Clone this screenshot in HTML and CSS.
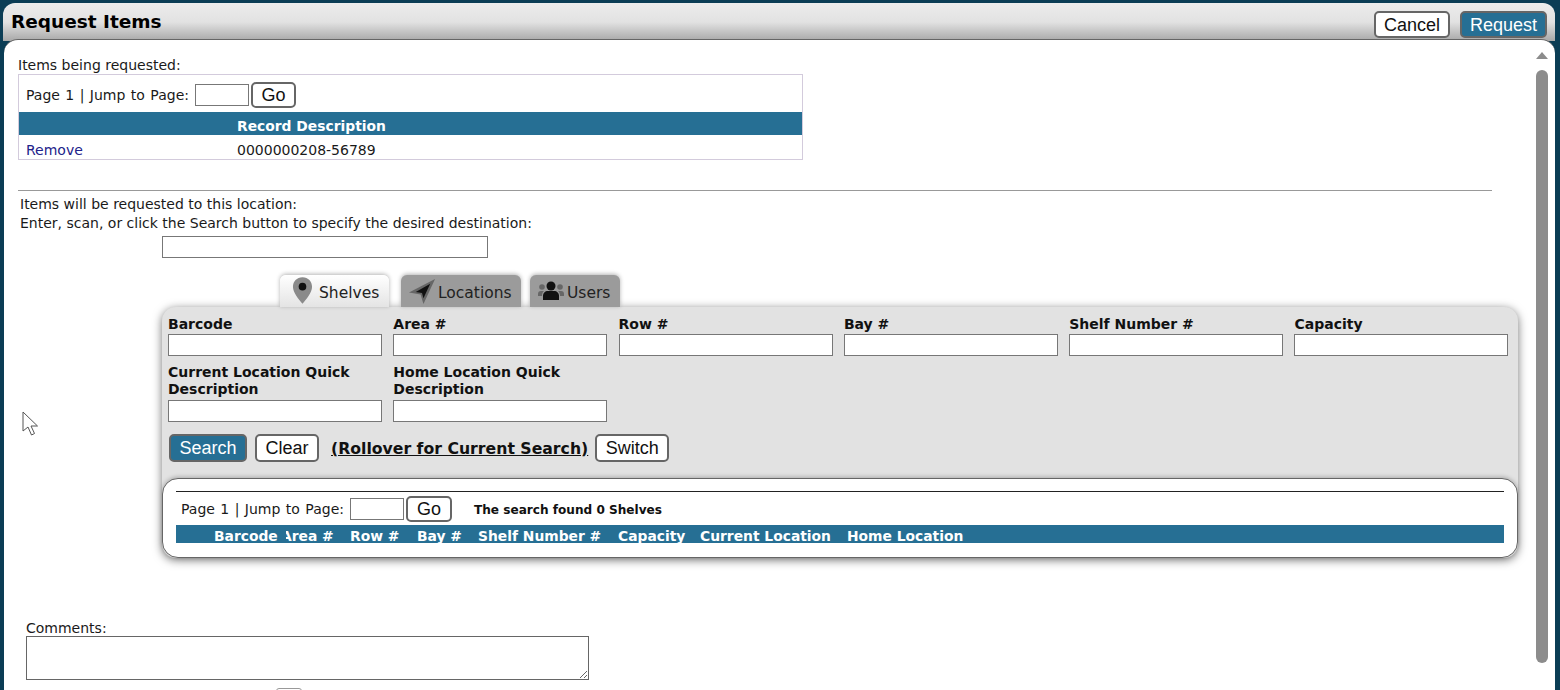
FILE: index.html
```html
<!DOCTYPE html>
<html lang="en">
<head>
<meta charset="utf-8">
<title>Request Items</title>
<link rel="stylesheet" href="styles.css">
</head>
<body>
<div class="window">
  <header class="titlebar">
    <h1 class="title">Request Items</h1>
    <div class="actions">
      <button class="btn btn-title">Cancel</button>
      <button class="btn btn-title btn-primary">Request</button>
    </div>
  </header>
  <div class="content">
    <main class="scroll">
      <div class="items-label">Items being requested:</div>
      <section class="items-box">
        <div class="pager">
          <span>Page 1 | Jump to Page:</span>
          <input class="pager-input" type="text">
          <button class="btn btn-go">Go</button>
        </div>
        <div class="items-head"><span class="items-col1"></span><span>Record Description</span></div>
        <div class="items-row"><a class="items-col1 link" href="#">Remove</a><span>0000000208-56789</span></div>
      </section>
      <hr class="rule">
      <div class="dest-text">
        <div>Items will be requested to this location:</div>
        <div>Enter, scan, or click the Search button to specify the desired destination:</div>
      </div>
      <input class="dest-input" type="text">
      <nav class="tabs">
        <div class="tab tab-active">
          <svg class="ico-pin" viewBox="0 0 22 28"><path fill="#8a8a8a" d="M11 0C5 0 1 4.500 1 10c0 6 6 13 10 18 4-5 10-12 10-18C21 4.500 17 0 11 0z"/><circle cx="11" cy="10" r="4" fill="#111"/></svg>
          <span>Shelves</span>
        </div>
        <div class="tab tab-nav">
          <svg class="ico-nav" viewBox="0 0 28 28"><path fill="#666" d="M0 15 27 1 15 27 12 17z"/><path fill="#111" d="M7 14.500 22 6 15 21 13.500 15.500z"/></svg>
          <span>Locations</span>
        </div>
        <div class="tab tab-users">
          <svg class="ico-users" viewBox="0 0 26 20"><circle cx="13" cy="5" r="4.500" fill="#111"/><path fill="#111" d="M5 19v-4c0-3 2-5 5-5h6c3 0 5 2 5 5v4z"/><circle cx="4" cy="6" r="2.800" fill="#666"/><circle cx="22" cy="6" r="2.800" fill="#666"/><path fill="#666" d="M0 15v-2c0-2 1-3 3-3h3c-1.500 1-2 3-2 5zM26 15v-2c0-2-1-3-3-3h-3c1.500 1 2 3 2 5z"/></svg>
          <span>Users</span>
        </div>
      </nav>
      <section class="panel">
        <div class="fields">
          <label class="field"><span class="field-label">Barcode</span><input type="text"></label>
          <label class="field"><span class="field-label">Area #</span><input type="text"></label>
          <label class="field"><span class="field-label">Row #</span><input type="text"></label>
          <label class="field"><span class="field-label">Bay #</span><input type="text"></label>
          <label class="field"><span class="field-label">Shelf Number #</span><input type="text"></label>
          <label class="field"><span class="field-label">Capacity</span><input type="text"></label>
          <label class="field field-tall"><span class="field-label">Current Location Quick Description</span><input type="text"></label>
          <label class="field field-tall"><span class="field-label">Home Location Quick Description</span><input type="text"></label>
        </div>
        <div class="search-actions">
          <button class="btn btn-search btn-primary">Search</button>
          <button class="btn btn-clear">Clear</button>
          <a class="rollover" href="#">(Rollover for Current Search)</a>
          <button class="btn btn-switch">Switch</button>
        </div>
        <div class="results">
          <div class="results-rule"></div>
          <div class="pager pager-results">
            <span>Page 1 | Jump to Page:</span>
            <input class="pager-input" type="text">
            <button class="btn btn-go btn-go-wide">Go</button>
            <strong class="found">The search found 0 Shelves</strong>
          </div>
          <div class="results-head">
            <span></span>
            <span>Barcode</span>
            <span class="clip"><span class="clip-inner">Area #</span></span>
            <span>Row #</span>
            <span>Bay #</span>
            <span>Shelf Number #</span>
            <span>Capacity</span>
            <span>Current Location</span>
            <span>Home Location</span>
          </div>
        </div>
      </section>
      <div class="comments">
        <label class="comments-label" for="c">Comments:</label>
        <textarea id="c" class="comments-input"></textarea>
      </div>
      <div class="peek"></div>
      <svg class="cursor" viewBox="0 0 17 25"><path fill="#fff" stroke="#555" stroke-width="1" d="M1 1v19l5-4 3.500 8 3-1.500-3.500-7.500h6.500z"/></svg>
    </main>
    <aside class="scrollbar">
      <div class="arrow"></div>
      <div class="thumb"></div>
    </aside>
  </div>
</div>
</body>
</html>
```
FILE: styles.css
```css
* { box-sizing: border-box; }
html, body { margin: 0; height: 690px; overflow: hidden; }
body {
  background: #0b3d55;
  font-family: "DejaVu Sans", Verdana, sans-serif;
  font-size: 14px;
  color: #1a1a1a;
  padding: 3px 5px 0 3px;
}
.window {
  height: 687px;
  border-radius: 12px 12px 0 0;
  background: linear-gradient(#ececec, #e2e2e2 50%, #a8a8a8 100%);
  background-size: 100% 38px;
  background-repeat: no-repeat;
  display: flex;
  flex-direction: column;
  overflow: hidden;
}
.titlebar {
  height: 36px;
  flex: none;
  display: flex;
  justify-content: space-between;
  align-items: flex-start;
  padding: 8px 8px 0 8px;
}
.title { margin: 0; font-size: 18.5px; line-height: 21px; font-weight: 700; color: #000; }
.actions { display: flex; gap: 10px; }
.btn {
  font-family: "Liberation Sans", Arial, sans-serif;
  font-size: 18px;
  line-height: 1;
  padding: 0;
  background: #fff;
  color: #111;
  border: 2px solid #666;
  border-radius: 5px;
}
.btn-primary { background: #266f94; color: #fff; }
.btn-title { height: 27px; width: 76px; }
.btn-title.btn-primary { width: 87px; }
.content {
  flex: 1;
  min-height: 0;
  display: flex;
  background: #fff;
  border-radius: 14px 14px 0 0;
  border-top: 1px solid #666;
  margin-left: 1px;
}
.scroll { flex: 1; min-width: 0; padding: 16px 0 0 14px; overflow: hidden; position: relative; }
.scrollbar { width: 19px; flex: none; display: flex; flex-direction: column; align-items: flex-start; padding: 12px 0 0 0; }
.arrow { width: 0; height: 0; border: 6px solid transparent; border-top: 0; border-bottom: 7px solid #8c8c8c; }
.thumb { margin-top: 11px; width: 12px; height: 593px; background: #8c8c8c; border-radius: 6px; }
.items-label { line-height: 18px; }
.items-box { width: 785px; border: 1px solid #d3cbdc; margin-top: 0; }
.pager { display: flex; align-items: center; height: 37px; padding: 2px 0 0 7px; gap: 5px; word-spacing: 1px; }
.pager-input { width: 54px; height: 22px; border: 1px solid #777; margin: 0 0 0 1px; padding: 0; background: #fff; }
.btn-go { width: 45px; height: 26px; margin-left: -3px; }
.btn-go-wide { width: 46px; }
.items-head { height: 23px; padding-top: 4px; background: #266f94; color: #fff; font-weight: 700; font-size: 13.85px; display: flex; align-items: center; }
.items-row { height: 24px; padding-top: 5px; display: flex; align-items: center; }
.items-col1 { display: block; width: 218px; padding-left: 7px; }
.link { color: #22228a; text-decoration: none; }
.rule { margin: 30px 0 0; width: 1474px; border: 0; border-top: 1px solid #999; height: 1px; }
.dest-text { margin: 4px 0 0 2px; line-height: 19px; }
.dest-input { display: block; margin: 3px 0 0 144px; width: 326px; height: 22px; border: 1px solid #777; background: #fff; padding: 0; }
.tabs { display: flex; margin: 17px 0 0 262px; height: 32px; position: relative; z-index: 3; }
.tab {
  height: 32px;
  display: flex;
  align-items: center;
  padding-top: 4px;
  border-radius: 6px 6px 0 0;
  background: #9b9b9b;
  box-shadow: 0 -1px 4px rgba(0,0,0,.3);
  font-size: 15.5px;
  color: #222;
}
.tab-active { width: 109px; background: linear-gradient(#fff, #e4e4e4); padding-left: 12px; gap: 6px; }
.tab-nav { width: 120px; margin-left: 12px; padding-left: 8px; gap: 2px; }
.tab-users { width: 90px; margin-left: 9px; padding-left: 8px; gap: 3px; }
.ico-pin { width: 21px; height: 27px; margin-top: -6px; }
.ico-nav { width: 27px; height: 27px; margin-top: -4px; }
.ico-users { width: 26px; height: 20px; margin-top: -5px; }
.panel {
  margin-left: 144px;
  width: 1356px;
  height: 251px;
  background: #e2e2e2;
  border-radius: 14px;
  box-shadow: 0 2px 10px rgba(0,0,0,.55);
  display: flex;
  flex-direction: column;
  position: relative;
  z-index: 2;
}
.fields {
  display: grid;
  grid-template-columns: repeat(6, 214px);
  column-gap: 11.3px;
  padding: 9px 0 0 6px;
  row-gap: 8px;
  align-items: start;
}
.field { display: flex; flex-direction: column; }
.field-label { font-weight: 700; line-height: 17px; color: #111; }
.field input { height: 22px; width: 214px; border: 1px solid #777; background: #fff; padding: 0; margin-top: 1px; }
.field-tall input { margin-top: 2px; }
.search-actions { display: flex; align-items: center; padding: 12px 0 0 7px; height: 40px; }
.btn-search { width: 78px; height: 28px; }
.btn-clear { width: 64px; height: 28px; margin-left: 8px; }
.rollover { margin: 1px 0 0 12px; font-weight: 700; font-size: 15.7px; color: #111; white-space: nowrap; }
.btn-switch { width: 74px; height: 28px; margin-left: 7px; }
.results {
  margin-top: auto;
  height: 80px;
  background: #fff;
  border: 1px solid #666;
  border-radius: 16px;
  box-shadow: 0 -1px 4px rgba(0,0,0,.25);
  padding: 12px 13px 0 13px;
}
.results-rule { border-top: 1px solid #222; }
.pager-results { height: 33px; padding: 0 0 0 5px; }
.found { font-size: 12.1px; margin: 2px 0 0 17px; color: #111; word-spacing: 0; }
.results-head {
  height: 18px;
  padding-top: 3px;
  background: #266f94;
  color: #fff;
  font-weight: 700;
  font-size: 13.85px;
  display: grid;
  grid-template-columns: 38px 72px 64px 67px 61px 140px 82px 147px auto;
  align-items: center;
  white-space: nowrap;
}
.clip { overflow: hidden; }
.clip-inner { display: block; margin-left: -5px; }
.comments { margin: 62px 0 0 8px; }
.comments-label { display: block; line-height: 16px; }
.comments-input { display: block; width: 563px; height: 44px; border: 1px solid #666; margin: 0; padding: 0; background: #fff; }
.peek { margin: 8px 0 0 258px; width: 26px; height: 10px; border: 1px solid #999; border-radius: 3px; }
.cursor { position: absolute; left: 18px; top: 371px; width: 17px; height: 25px; }
```
